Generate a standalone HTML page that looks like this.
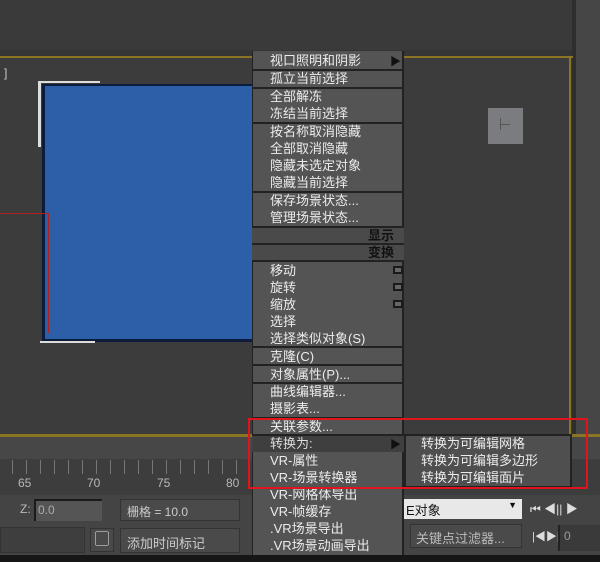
<!DOCTYPE html>
<html><head><meta charset="utf-8"><style>
*{margin:0;padding:0;box-sizing:border-box}
body{width:600px;height:562px;overflow:hidden;background:#3a3a3a;position:relative;font-family:"Liberation Sans","Noto Sans CJK SC",sans-serif;}
.a{position:absolute}
.m{position:absolute;left:252px;width:152px;background:#545454;}
.t{position:absolute;left:270px;color:#ececec;font-size:13px;line-height:17px;white-space:nowrap}
.sep{position:absolute;left:252px;width:152px;height:2px;background:#222}
.tk{position:absolute;top:460px;width:1px;height:14px;background:#777}
.n{position:absolute;top:476px;color:#b8b8b8;font-size:12px}
.s{position:absolute;left:393px;width:10px;height:8px;border:2px solid #1a1a1a;background:#666}
</style></head><body>
<div class="a" style="left:0;top:0;width:600px;height:52px;background:#3a3a3a"></div>
<div class="a" style="left:0;top:50px;width:572px;height:6px;background:#353535"></div>
<div class="a" style="left:572px;top:0;width:4px;height:440px;background:#2e2e2e"></div>
<div class="a" style="left:576px;top:0;width:24px;height:440px;background:#464646"></div>
<div class="a" style="left:0;top:56px;width:573px;height:2px;background:#8a7524"></div>
<div class="a" style="left:0;top:58px;width:569px;height:376px;background:#3c3c3c"></div>
<div class="a" style="left:569px;top:56px;width:2px;height:378px;background:#8a7524"></div>
<div class="a" style="left:4px;top:66px;color:#ccc;font-size:12px">]</div>
<div class="a" style="left:38px;top:81px;width:3px;height:66px;background:#ddd"></div>
<div class="a" style="left:38px;top:81px;width:62px;height:2px;background:#ddd"></div>
<div class="a" style="left:42px;top:84px;width:211px;height:258px;background:#2d5ea8;border-left:3px solid #0c1c3a;border-top:2px solid #0c1c3a;border-bottom:3px solid #0c1c3a"></div>
<div class="a" style="left:40px;top:341px;width:55px;height:2px;background:#ddd"></div>
<div class="a" style="left:0;top:213px;width:48px;height:1px;background:#b02020"></div>
<div class="a" style="left:48px;top:213px;width:1px;height:120px;background:#b02020"></div>
<div class="a" style="left:488px;top:108px;width:35px;height:36px;background:#7a7c80"></div>
<div class="a" style="left:500px;top:118px;width:1px;height:12px;background:#555"></div>
<div class="a" style="left:500px;top:124px;width:10px;height:1px;background:#555"></div>
<!-- bottom -->
<div class="a" style="left:0;top:434px;width:600px;height:3px;background:#8a7524"></div>
<div class="a" style="left:0;top:437px;width:600px;height:22px;background:#474747"></div>
<div class="a" style="left:0;top:459px;width:600px;height:36px;background:#3d3d3d"></div>
<div class="tk" style="left:12px"></div><div class="tk" style="left:26px"></div><div class="tk" style="left:40px"></div><div class="tk" style="left:54px"></div><div class="tk" style="left:68px"></div><div class="tk" style="left:82px"></div><div class="tk" style="left:96px"></div><div class="tk" style="left:110px"></div><div class="tk" style="left:124px"></div><div class="tk" style="left:138px"></div><div class="tk" style="left:152px"></div><div class="tk" style="left:166px"></div><div class="tk" style="left:180px"></div><div class="tk" style="left:194px"></div><div class="tk" style="left:208px"></div><div class="tk" style="left:222px"></div><div class="tk" style="left:236px"></div>
<div class="n" style="left:18px">65</div><div class="n" style="left:87px">70</div><div class="n" style="left:157px">75</div><div class="n" style="left:226px">80</div>
<div class="a" style="left:0;top:495px;width:600px;height:60px;background:#444"></div>
<div class="a" style="left:20px;top:502px;color:#bbb;font-size:12px">Z:</div>
<div class="a" style="left:34px;top:499px;width:68px;height:22px;background:#555;border-top:2px solid #1a1a1a;border-left:2px solid #1a1a1a;color:#aaa;font-size:12px;padding:2px">0.0</div>
<div class="a" style="left:120px;top:499px;width:120px;height:22px;background:#4a4a4a;border:1px solid #333;color:#ccc;font-size:12px;padding:3px 6px">栅格 = 10.0</div>
<div class="a" style="left:0;top:527px;width:85px;height:26px;background:#3e3e3e;border:1px solid #333"></div>
<div class="a" style="left:90px;top:528px;width:24px;height:24px;background:#4a4a4a;border:1px solid #333;color:#eee;font-size:15px;text-align:center;line-height:22px">▢</div>
<div class="a" style="left:120px;top:528px;width:120px;height:25px;background:#4a4a4a;border:1px solid #333;color:#ccc;font-size:13px;padding:4px 6px">添加时间标记</div>
<div class="a" style="left:404px;top:499px;width:118px;height:20px;background:#e8e8e8;color:#111;font-size:13px;padding:1px 2px">E对象<span style="position:absolute;right:5px;top:1px;font-size:9px">▼</span></div>
<div class="a" style="left:530px;top:500px;color:#ddd;font-size:12px">⏮ ◀|| ▶</div>
<div class="a" style="left:410px;top:524px;width:112px;height:24px;background:#4a4a4a;border:1px solid #333;color:#bbb;font-size:13px;padding:3px 5px">关键点过滤器...</div>
<div class="a" style="left:532px;top:528px;color:#ddd;font-size:11px">|◀▶|</div>
<div class="a" style="left:558px;top:525px;width:42px;height:26px;background:#3a3a3a;border-left:2px solid #222;color:#999;font-size:12px;padding:4px">0</div>
<div class="a" style="left:0;top:555px;width:600px;height:7px;background:#161616"></div>
<!-- menu -->
<div class="m" style="top:51px;height:504px;border-right:2px solid #222;border-left:1px solid #222"></div>
<div class="a" style="left:252px;top:435px;width:152px;height:17px;background:#3f3f3f"></div>
<div class="a" style="left:252px;top:226px;width:152px;height:35px;background:#4a4a4a"></div>
<div class="sep" style="top:69px"></div><div class="sep" style="top:87px"></div><div class="sep" style="top:122px"></div><div class="sep" style="top:191px"></div><div class="sep" style="top:226px"></div><div class="sep" style="top:243px"></div><div class="sep" style="top:260px"></div><div class="sep" style="top:346px"></div><div class="sep" style="top:364px"></div><div class="sep" style="top:382px"></div><div class="sep" style="top:417px"></div><div class="sep" style="top:434px"></div>
<div class="t" style="top:52px">视口照明和阴影</div><div class="a" style="left:390px;top:53px;color:#111;font-size:11px">▶</div>
<div class="t" style="top:70px">孤立当前选择</div>
<div class="t" style="top:88px">全部解冻</div><div class="t" style="top:105px">冻结当前选择</div>
<div class="t" style="top:123px">按名称取消隐藏</div><div class="t" style="top:140px">全部取消隐藏</div><div class="t" style="top:157px">隐藏未选定对象</div><div class="t" style="top:174px">隐藏当前选择</div>
<div class="t" style="top:192px">保存场景状态...</div><div class="t" style="top:209px">管理场景状态...</div>
<div class="t" style="top:227px;left:368px;color:#111;font-weight:bold">显示</div>
<div class="t" style="top:244px;left:368px;color:#111;font-weight:bold">变换</div>
<div class="t" style="top:262px">移动</div><div class="t" style="top:279px">旋转</div><div class="t" style="top:296px">缩放</div><div class="t" style="top:313px">选择</div><div class="t" style="top:330px">选择类似对象(S)</div>
<div class="s" style="top:266px"></div><div class="s" style="top:283px"></div><div class="s" style="top:300px"></div>
<div class="t" style="top:348px">克隆(C)</div>
<div class="t" style="top:366px">对象属性(P)...</div>
<div class="t" style="top:383px">曲线编辑器...</div><div class="t" style="top:400px">摄影表...</div>
<div class="t" style="top:418px">关联参数...</div>
<div class="t" style="top:435px;color:#ddd">转换为:</div><div class="a" style="left:390px;top:436px;color:#111;font-size:11px">▶</div>
<div class="t" style="top:452px">VR-属性</div><div class="t" style="top:469px">VR-场景转换器</div><div class="t" style="top:486px">VR-网格体导出</div><div class="t" style="top:503px">VR-帧缓存</div><div class="t" style="top:520px">.VR场景导出</div><div class="t" style="top:537px">.VR场景动画导出</div>
<!-- submenu -->
<div class="a" style="left:404px;top:434px;width:168px;height:54px;background:#4f4f4f;border:2px solid #222"></div>
<div class="t" style="left:421px;top:435px">转换为可编辑网格</div>
<div class="t" style="left:421px;top:452px">转换为可编辑多边形</div>
<div class="t" style="left:421px;top:469px">转换为可编辑面片</div>
<div class="a" style="left:248px;top:418px;width:340px;height:71px;border:2px solid #e0141c"></div>
</body></html>
